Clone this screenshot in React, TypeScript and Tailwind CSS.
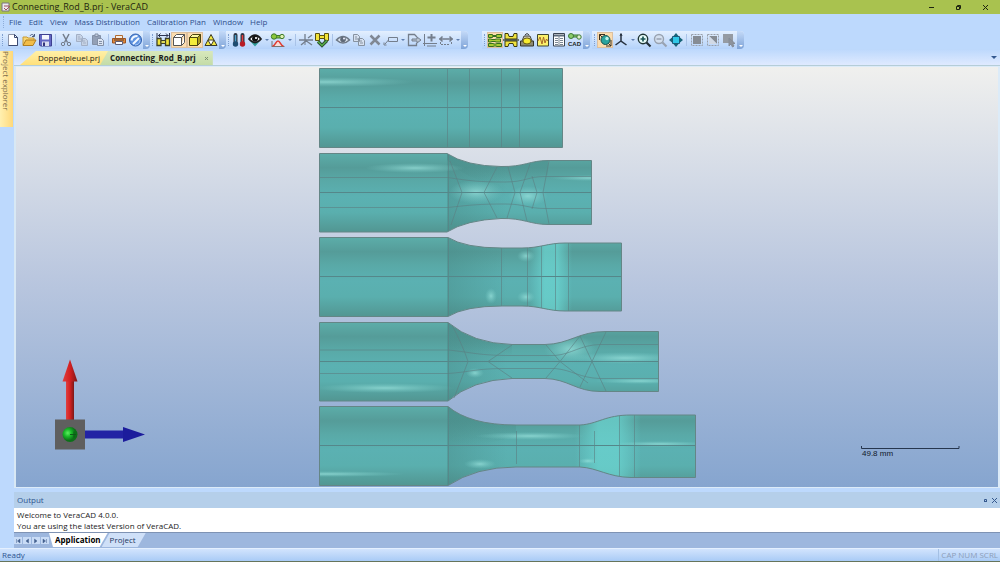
import * as React from "react"
import { clsx } from "clsx"

type IconProps = { children: React.ReactNode }

function Icon({ children }: IconProps) {
  return (
    <svg viewBox="0 0 16 16" className="h-4 w-4" fill="none" aria-hidden="true">
      {children}
    </svg>
  )
}

const GREY = "#747e8c"

const icons = {
  newFile: (
    <Icon>
      <path d="M3.500 2.500h6l3 3v8h-9z" fill="#fff" stroke="#8b93a8" />
      <path d="M9.500 2.500l3 3v8h-9" stroke="#3b4a72" />
      <path d="M9.500 2.500v3h3" stroke="#3b4a72" />
    </Icon>
  ),
  open: (
    <Icon>
      <path d="M2 13V5h4l1 1h6v2" fill="#f7d774" stroke="#c99a34" />
      <path d="M2 13.500L5 8h10l-3 5.500z" fill="#f2bd48" stroke="#b07e20" />
      <path d="M9 4c1-2 3-2 4 0M13.500 2v2.500h-2.500" stroke="#4a5a80" />
    </Icon>
  ),
  save: (
    <Icon>
      <path d="M2.500 2.500h12v11.500h-11l-1-1z" fill="#6468c4" stroke="#3f4190" />
      <path d="M5 3h7v4.500H5z" fill="#f4f6fc" />
      <path d="M5 9.500h7V14H5z" fill="#d9ddf0" />
      <path d="M6 10.500h2V14H6z" fill="#34357c" />
    </Icon>
  ),
  cut: (
    <Icon>
      <path d="M5 2l4.500 8.500M11 2L6.500 10.500" stroke={GREY} strokeWidth="1.500" />
      <circle cx="5" cy="12" r="1.700" stroke={GREY} />
      <circle cx="11" cy="12" r="1.700" stroke={GREY} />
    </Icon>
  ),
  copy: (
    <Icon>
      <path d="M2.500 2.500h4l2 2v5h-6zM7.500 6.500h4l2 2v5h-6z" fill="#c6d2e4" stroke="#a3b0c6" />
      <path d="M4 5h2M4 7h3M9 9h2M9 11h3" stroke="#a3b0c6" />
    </Icon>
  ),
  paste: (
    <Icon>
      <path d="M2.500 3.500h8v9h-8z" fill="#93a0b6" stroke="#8390a6" />
      <path d="M5 2h3v2.500H5z" fill="#c6d0e0" stroke="#8390a6" />
      <path d="M7.500 6.500h4l2 2v5h-6z" fill="#dbe4f2" stroke="#8390a6" />
      <path d="M9 9.500h3M9 11.500h3" stroke="#8390a6" />
    </Icon>
  ),
  print: (
    <Icon>
      <path d="M4.500 3.500h7v3h-7z" fill="#f6efe4" stroke="#b06a30" />
      <path d="M1.500 6.500h13v4.500h-13z" fill="#e08a3c" stroke="#9b5524" />
      <path d="M4.500 9.500h7v3h-7z" fill="#fff" stroke="#5e5e78" />
      <path d="M3 8h10" stroke="#5a3c2c" />
    </Icon>
  ),
  help: (
    <Icon>
      <circle cx="8.500" cy="8" r="6" fill="#5d92e0" stroke="#2f5fae" />
      <path d="M4.500 8.500C5 5.500 7.500 4 10.500 4M6 12l6-6" stroke="#f0f7ff" strokeWidth="2" />
      <path d="M8 13c3 0 5-2 5-5" stroke="#a8c8f4" />
    </Icon>
  ),
  massMeasure: (
    <Icon>
      <path d="M2 6.500h4v7H2zM10.500 6.500h4v7h-4z" fill="#efe33c" stroke="#3c3f28" strokeWidth="1.300" />
      <path d="M6 8.500h4.500v3H6z" fill="#dcd858" stroke="#3c3f28" />
      <path d="M3 3.500h10.500M5.500 1.500l-2 2 2 2M11 1.500l2 2-2 2M2 1v5M14.500 1v5" stroke="#2d3550" />
    </Icon>
  ),
  cubeWhite: (
    <Icon>
      <path d="M2.500 5.500h8v8h-8zM2.500 5.500l3-3h8l-3 3M13.500 2.500v8l-3 3" fill="#fff" stroke="#555" />
    </Icon>
  ),
  cubeYellow: (
    <Icon>
      <path d="M2.500 5.500h8v8h-8z" fill="#f3ec3c" stroke="#4a4410" />
      <path d="M2.500 5.500l3-3h8l-3 3z" fill="#fbf7a0" stroke="#4a4410" />
      <path d="M10.500 5.500l3-3v8l-3 3z" fill="#a89a1c" stroke="#4a4410" />
    </Icon>
  ),
  triangles: (
    <Icon>
      <path d="M8 2.500l6 11H2z" fill="#f2e842" stroke="#3a3a28" />
      <path d="M5 8h6l-3 5.500z" fill="#fff" stroke="#3a3a28" />
    </Icon>
  ),
  thermo: (
    <Icon>
      <path d="M4.500 3v9M11.500 3v9" stroke="#2c3442" strokeWidth="4" strokeLinecap="round" />
      <path d="M4.500 3v8" stroke="#4aa0cc" strokeWidth="1.500" />
      <path d="M11.500 3v8" stroke="#e84040" strokeWidth="1.500" />
      <circle cx="4.500" cy="12" r="2.700" fill="#1f4c70" />
      <circle cx="11.500" cy="12" r="2.700" fill="#b81c24" />
    </Icon>
  ),
  eyeTeal: (
    <Icon>
      <path d="M3.500 9.500h9L8 14.500z" fill="#2f9c98" />
      <path d="M2 7Q8-.5 14 7 8 14 2 7z" fill="#fff" stroke="#1c1c1c" strokeWidth="1.800" />
      <circle cx="8" cy="6.800" r="3" fill="#111" />
      <circle cx="9" cy="6" r="1.100" fill="#fff" />
    </Icon>
  ),
  rodCurve: (
    <Icon>
      <path d="M6 3.500h5v2.500H6z" fill="#8cc83c" stroke="#3c7a2c" />
      <circle cx="4" cy="4.500" r="2.700" fill="#8cc83c" stroke="#3c7a2c" />
      <circle cx="12" cy="4.500" r="2.200" fill="#dff0b0" stroke="#3c7a2c" />
      <path d="M1.500 14.500h13M2 9v5" stroke="#777" />
      <path d="M2.500 14c3 0 3-5 5.500-5s2.500 5 5.500 5" fill="#f8dcd8" stroke="#e03a30" strokeWidth="1.500" />
    </Icon>
  ),
  crossing: (
    <Icon>
      <path d="M1 8h14M7 8V2M7 8l7 5M9 8L3 13M10 6l4-3" stroke={GREY} strokeWidth="1.300" />
      <path d="M7 8v5" stroke={GREY} />
    </Icon>
  ),
  massCheck: (
    <Icon>
      <path d="M1.500 1.500h4v7h-4zM10.500 1.500h4v7h-4z" fill="#f4e43a" stroke="#5a5210" />
      <path d="M5.500 3.500h5v3h-5z" fill="#f4e43a" stroke="#5a5210" />
      <path d="M4 9.500l4 4 5-5" stroke="#2c4c34" strokeWidth="3.200" />
      <path d="M4 9.500l4 4 5-5" stroke="#56b048" strokeWidth="1.300" />
    </Icon>
  ),
  eyeGrey: (
    <Icon>
      <path d="M1.500 8Q8 1 14.500 8 8 14 1.500 8z" fill="#dbe4f0" stroke="#6d7886" strokeWidth="1.500" />
      <circle cx="8" cy="7.500" r="2.800" fill="#5f6a78" />
      <circle cx="9" cy="6.500" r="1" fill="#eef" />
    </Icon>
  ),
  pagesGrey: (
    <Icon>
      <path d="M2.500 2.500h4l2 2v5h-6zM7.500 6.500h4l2 2v5h-6z" fill="#d6e1f0" stroke="#8792a0" />
      <path d="M4 5h2M4 7h3M9 9h2M9 11h3" stroke="#8792a0" />
    </Icon>
  ),
  remove: (
    <Icon>
      <path d="M3.500 3.500l9 9M12.500 3.500l-9 9" stroke="#808894" strokeWidth="2.500" />
    </Icon>
  ),
  callout: (
    <Icon>
      <path d="M5.500 5.500h9v4h-9zM5.500 8L2 12" stroke={GREY} />
      <path d="M1 10.500v2.500h2.500" stroke={GREY} />
    </Icon>
  ),
  exportDoc: (
    <Icon>
      <path d="M10.500 5V4.500l-2-2h-6v11h8V11" stroke={GREY} strokeWidth="1.300" />
      <path d="M6 7h5V5l4 3-4 3V9H6z" fill="#b9c4d2" stroke={GREY} />
    </Icon>
  ),
  axisPlus: (
    <Icon>
      <path d="M2.500 2v12M1 11.500h14M5 14h9" stroke={GREY} />
      <path d="M9.500 2v7.500M5.500 5.500h8" stroke={GREY} strokeWidth="2" />
    </Icon>
  ),
  widthArrows: (
    <Icon>
      <path d="M1 7h14M4.500 4.500L2 7l2.500 2.500M11.500 4.500L14 7l-2.500 2.500" stroke={GREY} strokeWidth="1.500" />
      <path d="M2.500 10v3M13.500 10v3M3 12.500h9" stroke={GREY} strokeDasharray="2 1" />
    </Icon>
  ),
  stages: (
    <Icon>
      <path d="M1.500 2.500h4v1h4v-1h5v3h-5v-1h-4v1h-4zM1.500 7h3v.5h4V7h5v3h-5v-.5h-4v.5h-3zM1.500 11.500h5v.5h3v-.5h5v3h-5V14h-3v.5h-5z" fill="#a8cc34" stroke="#37701f" />
    </Icon>
  ),
  dieHalf: (
    <Icon>
      <path d="M2 1.500h3l1 3h4l1-3h3V7H2zM2 14.500h3l1-3h4l1 3h3V9H2z" fill="#f0e440" stroke="#3c3a10" />
      <path d="M0 8h16" stroke="#343a20" strokeWidth="1.300" />
    </Icon>
  ),
  diePress: (
    <Icon>
      <path d="M1.500 9h13v5h-13z" fill="#8c8a72" stroke="#34342a" />
      <path d="M3 9l2-5h6l2 5" fill="#c9c6b4" stroke="#45443a" />
      <ellipse cx="8" cy="9" rx="4" ry="3" fill="#f8ec30" stroke="#6a6010" />
      <path d="M6 3l2-1.500L10 3" stroke="#333" />
    </Icon>
  ),
  chart: (
    <Icon>
      <path d="M2.500 2.500h11v11.500h-11z" fill="#fbf06a" stroke="#3e4630" />
      <path d="M3 9l2-4 2 7 1.500-7L10 11l1.500-4L13 9" stroke="#a86a28" />
    </Icon>
  ),
  table: (
    <Icon>
      <path d="M2.500 1.500h11v12.500h-11z" fill="#fff" stroke="#3a4452" />
      <path d="M3 3.500h10" stroke="#5a6878" strokeWidth="2" />
      <path d="M8 3v11M4 6.500h3M9 6.500h3M4 8.500h3M9 8.500h3M4 10.500h3M9 10.500h3M4 12.500h3M9 12.500h3" stroke="#7b8793" />
    </Icon>
  ),
  cad: (
    <Icon>
      <path d="M6 3h5v2H6z" fill="#8ccc6c" stroke="#3c7a34" />
      <circle cx="4" cy="4" r="2.500" fill="#8ccc6c" stroke="#3c7a34" />
      <circle cx="12" cy="5" r="2.200" fill="#dff0cc" stroke="#3c7a34" />
      <text x="1" y="14" fontSize="6" fontWeight="700" fontFamily="Liberation Sans, sans-serif" fill="#222">
        CAD
      </text>
    </Icon>
  ),
  orbit: (
    <Icon>
      <path d="M2.500 8V2.500H8M2.500 2.500l3 3M14 8v6H9M14 14l-3-3" stroke="#3a3020" />
      <circle cx="8.500" cy="8" r="4.500" fill="#2aa49e" stroke="#174f4c" />
      <circle cx="10" cy="6.500" r="1.700" fill="#b8f4ec" />
    </Icon>
  ),
  axes: (
    <Icon>
      <path d="M8 2v7l5.500 4M8 9l-5.500 4" stroke="#26313f" strokeWidth="1.500" />
      <path d="M7 4l1-2.500L9 4" stroke="#26313f" />
    </Icon>
  ),
  zoomIn: (
    <Icon>
      <circle cx="7" cy="7" r="4.700" fill="#e6fbf8" stroke="#1f3434" strokeWidth="1.400" />
      <path d="M4.500 7h5M7 4.500v5" stroke="#1a5454" strokeWidth="1.700" />
      <path d="M10.500 10.500l4 4" stroke="#1f2c34" strokeWidth="2.200" />
    </Icon>
  ),
  zoomOut: (
    <Icon>
      <circle cx="7" cy="7" r="4.500" fill="#d4e0ef" stroke="#98a2b0" strokeWidth="1.400" />
      <path d="M4.500 7h5" stroke="#98a2b0" strokeWidth="1.500" />
      <path d="M10.500 10.500l4 4" stroke="#98a2b0" strokeWidth="2.200" />
    </Icon>
  ),
  fit: (
    <Icon>
      <path d="M4.500 4.500h7v7h-7z" fill="#30c8e8" stroke="#1b5a7a" />
      <path d="M8 1l2.500 3h-5zM8 15l2.500-3h-5zM1 8l3-2.500v5zM15 8l-3-2.500v5z" fill="#176478" />
    </Icon>
  ),
  selectBox: (
    <Icon>
      <path d="M2.500 2.500h11v11h-11z" stroke="#9aa0aa" strokeDasharray="2 1" />
      <path d="M4 4h8v8H4z" fill="#868c94" />
    </Icon>
  ),
  selectInvert: (
    <Icon>
      <path d="M2.500 2.500h11v11h-11z" stroke="#9aa0aa" strokeDasharray="2 1" />
      <path d="M4 4h8v8z" fill="#868c94" />
      <path d="M4 4v8h8z" fill="#d2dae6" />
    </Icon>
  ),
  selectPick: (
    <Icon>
      <path d="M2 2h10v9H2z" fill="#959ba3" />
      <path d="M8 6v8l2-2 1.500 3 1.500-1-1.500-2.500H14z" fill="#8d939c" stroke="#858c96" />
    </Icon>
  ),
}

type IconName = keyof typeof icons

// "|" is a separator, "v" the small drop-down arrow of the icon before it
type Item = IconName | "|" | "v"

const ACTIVE: Item[] = ["cubeWhite", "cubeYellow", "stages", "orbit"]

const LEFT_GROUPS: Item[][] = [
  ["newFile", "open", "save", "|", "cut", "copy", "paste", "|", "print", "help"],
  ["massMeasure", "cubeWhite", "cubeYellow", "triangles"],
  [
    "thermo", "eyeTeal", "v", "rodCurve", "v", "|", "crossing", "massCheck", "|",
    "eyeGrey", "pagesGrey", "remove", "callout", "v", "exportDoc", "axisPlus", "widthArrows", "v",
  ],
]

const RIGHT_GROUPS: Item[][] = [
  ["stages", "dieHalf", "diePress", "chart", "table", "cad"],
  ["orbit", "axes", "v", "zoomIn", "zoomOut", "fit", "|", "selectBox", "selectInvert", "selectPick"],
]

function ToolGroup({ items }: { items: Item[] }) {
  return (
    <div className="flex h-[18px] items-center rounded-r bg-linear-to-b from-[#e3effe] to-[#b4d2fa]">
      <span className="mx-[2px] h-3 border-l border-dotted border-[#7f9fd0]" />
      {items.map((item, i) => {
        if (item === "|") return <span key={i} className="mx-[2px] h-3 w-px bg-[#a9c3e8]" />
        if (item === "v") {
          return (
            <button key={i} aria-label="More" className="flex h-4 w-[7px] items-center justify-center">
              <span className="border-x-2 border-t-2 border-x-transparent border-t-[#5f7fae]" />
            </button>
          )
        }
        return (
          <button
            key={i}
            aria-label={item}
            className={clsx("h-4 w-4", ACTIVE.includes(item) && "bg-[#fbdcae] outline -outline-offset-1 outline-[#dcc0a0]")}
          >
            {icons[item]}
          </button>
        )
      })}
      <span className="flex h-full w-[7px] items-end justify-center rounded-r bg-linear-to-b from-[#c4daf8] to-[#7fa4d8] pb-[2px]">
        <span className="border-x-2 border-t-2 border-x-transparent border-t-white" />
      </span>
    </div>
  )
}

function TitleBar() {
  return (
    <header className="flex h-[14px] shrink-0 items-center bg-[#a9c24f] text-[#1d2410]">
      <svg viewBox="0 0 10 10" className="mx-px h-[10px] w-[10px]" aria-hidden="true">
        <path d="M1 1h7v8H1z" fill="#eceaf0" stroke="#7b7480" />
        <path d="M3 4h5M3 6l2 2 4-4" fill="none" stroke="#a0525c" />
      </svg>
      <h1 className="text-[9px] leading-[14px]">Connecting_Rod_B.prj - VeraCAD</h1>
      <div className="ml-auto flex pr-[1px]">
        <button aria-label="Minimize" className="flex w-[27px] items-center justify-center">
          <span className="h-px w-[5px] bg-[#1d2410]" />
        </button>
        <button aria-label="Restore" className="flex w-[27px] items-center justify-center">
          <svg viewBox="0 0 7 7" className="h-[7px] w-[7px]" fill="none" stroke="#1d2410">
            <path d="M1.500 2.500h3v3h-3zM2.500 2V1.500h3v3H5" />
          </svg>
        </button>
        <button aria-label="Close" className="flex w-[27px] items-center justify-center">
          <svg viewBox="0 0 7 7" className="h-[7px] w-[7px]" fill="none" stroke="#1d2410">
            <path d="M1 1l5 5M6 1L1 6" />
          </svg>
        </button>
      </div>
    </header>
  )
}

const MENUS = ["File", "Edit", "View", "Mass Distribution", "Calibration Plan", "Window", "Help"]

function MenuBar() {
  return (
    <nav className="flex h-[17px] shrink-0 items-center gap-[7px] pb-px pl-[3px] text-[8px] leading-[16px] text-[#2f4f8c]">
      <span className="-mr-[2px] h-3 border-l border-dotted border-[#8fadd8]" />
      {MENUS.map((m) => (
        <button key={m}>{m}</button>
      ))}
    </nav>
  )
}

function DocumentTabs() {
  return (
    <div className="flex h-[17px] shrink-0 items-end border-b border-[#b5cdd8] bg-linear-to-b from-[#bcd8fc] to-[#dfeaff] pl-[6px] text-[8px] leading-[14px] text-[#1c1c1c]">
      <button className="h-[14px] bg-linear-to-b from-[#fff0a8] to-[#ffe07a] pr-[8px] pl-[18px] [clip-path:polygon(16px_0,100%_0,100%_100%,0_100%)]">
        Doppelpleuel.prj
      </button>
      <div className="-ml-[8px] flex h-[14px] items-center bg-linear-to-b from-[#d8e8bc] to-[#c4dca8] pr-1 pl-[10px] [clip-path:polygon(8px_0,100%_0,100%_100%,0_100%)]">
        <button className="font-bold">Connecting_Rod_B.prj</button>
        <button aria-label="Close tab" className="ml-2">
          <svg viewBox="0 0 5 5" className="h-[5px] w-[5px]" stroke="#7c9070">
            <path d="M1 1l3 3M4 1L1 4" />
          </svg>
        </button>
      </div>
      <button aria-label="Tab list" className="mr-[3px] ml-auto flex h-full items-center">
        <span className="border-x-[3px] border-t-[3px] border-x-transparent border-t-[#35598f]" />
      </button>
    </div>
  )
}

type Glint = { x: number; y: number; rx: number; ry: number }

type Rod = {
  outline: string
  lines: string
  mid: [x: number, y: number]
  glints: Glint[]
  // shaded strip where the shank runs into the neck, then the bright shoulder
  neck?: string
  shoulder?: [x: number, width: number]
}

const RODS: Rod[] = [
  {
    outline: "M319.500 68.500H562.500V147.500H319.500z",
    lines: "M447.500 69V147M469.500 69V147M501.500 69V147M519.500 69V147",
    mid: [562, 107],
    glints: [{ x: 325, y: 82, rx: 90, ry: 5 }],
  },
  {
    outline:
      "M319.500 153.500H447Q466 166 501 166.500C524 167 530 160.500 548 160.500H591.500V224.500H548C530 224.500 524 218 501 218.500Q466 220 447 232H319.500z",
    lines:
      "M448.500 154V231M320 177.500H448C470 181 480 182 505 182 525 182 528 176.500 545 176.500H591M320 207.500H448C470 205 480 204 505 204 525 204 528 208.500 545 208.500H591M450 161L462 192.500 451 225M497 167L484 192.500 497 218M508 167L515 192.500 507 218M530 164L520 192.500 527 221M532 176L537 192.500 532 209M549 161L543 192.500 549 224",
    mid: [591, 192],
    glints: [
      { x: 415, y: 168, rx: 50, ry: 5 },
      { x: 590, y: 178, rx: 40, ry: 3 },
      { x: 476, y: 192, rx: 27, ry: 12 },
      { x: 528, y: 196, rx: 20, ry: 10 },
    ],
    neck: "M447 153.500Q466 166 501 166.500C524 167 530 160.500 548 160.500V175C530 176 525 181 501 181Q472 185 447 160z",
  },
  {
    outline:
      "M319.500 237.500H448Q465 248 502 248H522C540 248 548 243 565 243H621.500V311H565C548 311 540 306 522 306H502Q465 306 448 316.500H319.500z",
    lines: "M448.500 238V316M501.500 248V306M527.500 248V306M541.500 246V308M555.500 244V310M568.500 243V311",
    mid: [621, 276],
    glints: [
      { x: 491, y: 296, rx: 6, ry: 8 },
      { x: 526, y: 256, rx: 9, ry: 6 },
      { x: 526, y: 297, rx: 9, ry: 6 },
    ],
    shoulder: [530, 42],
  },
  {
    outline:
      "M319.500 322.500H448Q473 343.500 512 344.500H545C570 344 578 331.500 606 331.500H658.500V391.500H600C576 391.500 568 379 545 378.500H512Q472 380 448 401H319.500z",
    lines:
      "M448.500 323V400M320 350H448C470 352 476 355 505 355.500H555C572 354 580 345 600 344.500H658M320 373.500H448C470 372 476 368.500 505 368.500H555C572 370 580 378 600 378.500H658M452 325Q463 346 468 361.500 461 380 454 398M512 345L488 361.500 512 378M546 345L560 361.500 588 383M546 378L560 361.500 580 336M580 336L592 361.500 606 391M606 332L592 361.500 580 387",
    mid: [658, 361],
    glints: [
      { x: 475, y: 373, rx: 9, ry: 5 },
      { x: 625, y: 358, rx: 55, ry: 6 },
      { x: 640, y: 381, rx: 45, ry: 3 },
      { x: 385, y: 388, rx: 70, ry: 5 },
      { x: 570, y: 349, rx: 26, ry: 14 },
    ],
    neck: "M448 322.500Q473 343.500 512 344.500V356H505Q470 356 448 350z",
  },
  {
    outline:
      "M319.500 406.500H448Q470 425 516 425H580C598 424 605 415 631 415H695.500V477.500H631C608 477 598 468 580 467H516Q476 467 448 485.500H319.500z",
    lines: "M448.500 407V485M516.500 431V464M579.500 425V467M594.500 431V463M619.500 416V476M634.500 415V477",
    mid: [695, 445],
    glints: [
      { x: 530, y: 436, rx: 55, ry: 4 },
      { x: 480, y: 464, rx: 16, ry: 5 },
      { x: 325, y: 474, rx: 80, ry: 3 },
      { x: 660, y: 444, rx: 50, ry: 3 },
      { x: 588, y: 461, rx: 10, ry: 3 },
    ],
    neck: "M448 406.500Q470 425 516 425V436Q470 450 448 440z",
    shoulder: [575, 66],
  },
]

function RodShape({ rod, index }: { rod: Rod; index: number }) {
  const clip = `rod-clip-${index}`
  return (
    <g>
      <clipPath id={clip}>
        <path d={rod.outline} />
      </clipPath>
      <path d={rod.outline} fill="url(#steel)" />
      <g clipPath={`url(#${clip})`}>
        {index > 0 && <rect x="447" y="60" width="60" height="430" fill="url(#neckShade)" />}
        {rod.neck && <path d={rod.neck} fill="url(#neckTop)" />}
        {rod.shoulder && (
          <rect x={rod.shoulder[0]} y="230" width={rod.shoulder[1]} height="258" fill="url(#shoulder)" />
        )}
        {rod.glints.map((g, i) => (
          <ellipse key={i} cx={g.x} cy={g.y} rx={g.rx} ry={g.ry} fill="url(#glint)" />
        ))}
      </g>
      <path d={rod.lines} fill="none" stroke="#5c7f82" strokeOpacity="0.6" />
      <path d={`M320 ${rod.mid[1] + 0.5}H${rod.mid[0]}`} stroke="#55878a" />
      <path d={rod.outline} fill="none" stroke="#648686" />
    </g>
  )
}

function Viewport() {
  return (
    <main className="min-h-0 flex-1 border-t border-r-2 border-b border-[#dcebf8] bg-linear-to-b from-[#f0f0ee] via-[#bac7df] to-[#86a5cf]">
      <svg viewBox="16 67 982 420" className="block h-full w-full" role="img" aria-label="Forging stages">
        <defs>
          <linearGradient id="steel" x1="0" y1="0" x2="0" y2="1">
            <stop offset="0" stopColor="#5cada9" />
            <stop offset="0.180" stopColor="#559c99" />
            <stop offset="0.350" stopColor="#59a9a7" />
            <stop offset="0.550" stopColor="#5bb1b2" />
            <stop offset="0.750" stopColor="#5aafae" />
            <stop offset="1" stopColor="#529692" />
          </linearGradient>
          <linearGradient id="neckShade">
            <stop offset="0" stopColor="#458582" stopOpacity="0.4" />
            <stop offset="1" stopColor="#458582" stopOpacity="0" />
          </linearGradient>
          <linearGradient id="neckTop" x1="0" y1="0" x2="0" y2="1">
            <stop offset="0" stopColor="#4a8f8c" stopOpacity="0.8" />
            <stop offset="1" stopColor="#4a8f8c" stopOpacity="0" />
          </linearGradient>
          <linearGradient id="shoulder">
            <stop offset="0" stopColor="#6cd6d2" stopOpacity="0" />
            <stop offset="0.350" stopColor="#6cd6d2" stopOpacity="0.700" />
            <stop offset="0.650" stopColor="#6cd6d2" stopOpacity="0.700" />
            <stop offset="1" stopColor="#6cd6d2" stopOpacity="0" />
          </linearGradient>
          <radialGradient id="glint">
            <stop offset="0" stopColor="#9ce4de" stopOpacity="0.700" />
            <stop offset="1" stopColor="#7cd0cc" stopOpacity="0" />
          </radialGradient>
          <linearGradient id="redShaft">
            <stop offset="0" stopColor="#e04040" />
            <stop offset="0.500" stopColor="#d42020" />
            <stop offset="1" stopColor="#7c1818" />
          </linearGradient>
          <radialGradient id="greenBall" cx="0.350" cy="0.400">
            <stop offset="0" stopColor="#5cf060" />
            <stop offset="0.500" stopColor="#18b828" />
            <stop offset="1" stopColor="#0c7018" />
          </radialGradient>
        </defs>

        {RODS.map((rod, i) => (
          <RodShape key={i} rod={rod} index={i} />
        ))}

        {/* axis triad */}
        <path d="M66 381h8v39h-8z" fill="url(#redShaft)" />
        <path d="M70 359.500L77.500 381.500h-15z" fill="url(#redShaft)" />
        <path d="M85 430.500h38v8H85z" fill="#2222a4" />
        <path d="M123 427l22 7.500-22 7.500z" fill="#1c1c9c" />
        <path d="M55 419.500h30v30H55z" fill="#5f5f5f" />
        <circle cx="70" cy="434.500" r="7.500" fill="url(#greenBall)" />
        <path d="M70 434.500h6M74 431.500v6" stroke="#0b5c16" />

        <path d="M861.500 446v2.500h97.500V446" fill="none" stroke="#26364e" />
        <text x="862" y="456" fontSize="8" fontFamily="Liberation Sans, sans-serif" fill="#10182a">
          49.8 mm
        </text>
      </svg>
    </main>
  )
}

const NAV = [
  { label: "First", d: "M1.500 1v4M5 1L2.500 3 5 5z" },
  { label: "Previous", d: "M4.500 1L2 3l2.500 2z" },
  { label: "Next", d: "M1.500 1L4 3 1.500 5z" },
  { label: "Last", d: "M4.500 1v4M1 1l2.500 2L1 5z" },
]

function OutputPanel() {
  return (
    <section className="mt-1 shrink-0 text-[8px]">
      <div className="flex h-[16px] items-center bg-[#b5cfea] px-[3px] text-[#2f5590]">
        <h2>Output</h2>
        <button aria-label="Pin" className="ml-auto">
          <svg viewBox="0 0 5 5" className="h-[5px] w-[5px]" fill="none" stroke="#35598f">
            <path d="M1.500 1.500h2v2h-2zM1 3.500h3" />
          </svg>
        </button>
        <button aria-label="Close output" className="ml-1">
          <svg viewBox="0 0 5 5" className="h-[5px] w-[5px]" stroke="#35598f">
            <path d="M0 0l5 5M5 0L0 5" />
          </svg>
        </button>
      </div>
      <div className="h-[24px] bg-white pt-px pl-[3px] leading-[11px] text-[#1a1a1a]">
        <p>Welcome to VeraCAD 4.0.0.</p>
        <p>You are using the latest Version of VeraCAD.</p>
      </div>
      <div className="flex h-[16px] items-start border-t border-[#7f93b4] bg-[#9db7de] leading-[14px]">
        <div className="flex gap-px pt-[4px]">
          {NAV.map((n) => (
            <button key={n.label} aria-label={n.label} className="h-[7px] w-[8px] bg-[#c9dcf6]">
              <svg viewBox="0 0 6 6" className="mx-auto h-[6px] w-[6px]" fill="#44618f" stroke="#44618f" strokeWidth="0.500">
                <path d={n.d} />
              </svg>
            </button>
          ))}
        </div>
        <button className="h-[14px] bg-white pr-[7px] pl-[6px] font-bold text-black [clip-path:polygon(0_0,100%_0,calc(100%-8px)_100%,4px_100%)]">
          Application
        </button>
        <button className="-ml-[6px] h-[14px] bg-[#cfe0f8] pr-[10px] pl-[8px] text-[#24375c] [clip-path:polygon(8px_0,100%_0,calc(100%-8px)_100%,0_100%)]">
          Project
        </button>
      </div>
    </section>
  )
}

function StatusBar() {
  return (
    <footer className="flex h-[14px] shrink-0 items-center justify-between overflow-hidden border-t border-b border-t-[#e4f0ff] border-b-[#66755c] bg-linear-to-b from-[#d2e4fd] to-[#a9cbf6] pl-[2px] text-[8px] leading-[12px] text-[#2f5590]">
      <span>Ready</span>
      <span className="border-l border-[#a4c0e4] pr-[2px] pl-[2px] whitespace-nowrap text-[#8c9db8]">CAP NUM SCRL</span>
    </footer>
  )
}

export default function App() {
  return (
    <div className="flex h-screen flex-col overflow-hidden bg-[#bdd9fd] font-['Open_Sans','Noto_Sans',sans-serif]">
      <TitleBar />
      <MenuBar />
      <div className="flex h-[18px] shrink-0 items-center">
        {LEFT_GROUPS.map((g, i) => (
          <ToolGroup key={i} items={g} />
        ))}
        <div className="ml-[14px] flex gap-[2px]">
          {RIGHT_GROUPS.map((g, i) => (
            <ToolGroup key={i} items={g} />
          ))}
        </div>
      </div>
      <div className="flex min-h-0 flex-1">
        <aside className="w-[14px] shrink-0 pt-[2px]">
          <button className="flex h-[76px] w-[13px] items-center bg-linear-to-r from-[#fff0b0] to-[#ffd878] text-[8px] leading-[13px] text-[#7c6c4c] [writing-mode:vertical-rl]">
            Project explorer
          </button>
        </aside>
        <div className="flex min-w-0 flex-1 flex-col">
          <DocumentTabs />
          <div className="flex min-h-0 flex-1 border-l-2 border-[#d8e8f4]">
            <Viewport />
          </div>
          <OutputPanel />
        </div>
      </div>
      <StatusBar />
    </div>
  )
}
